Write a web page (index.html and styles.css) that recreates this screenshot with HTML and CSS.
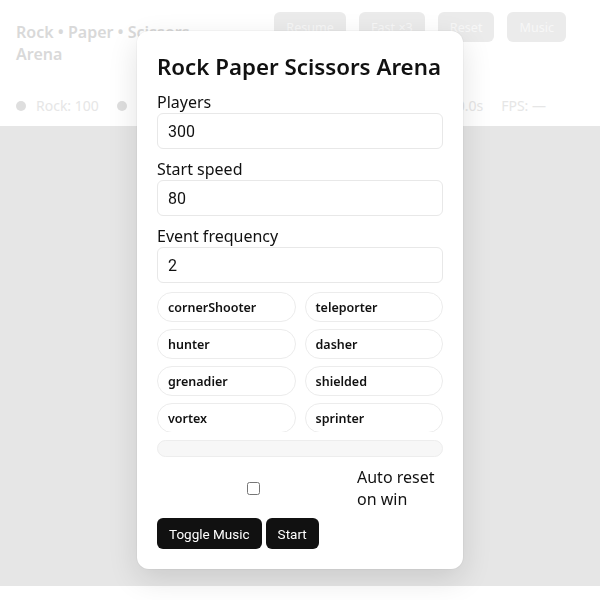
FILE: index.html
```html
<!DOCTYPE html>
<html>
<head>
<meta charset="utf-8">
<link rel="stylesheet" href="styles.css">
</head>
<body>
<header class="topbar">
  <div class="toprow">
    <h1 class="apptitle">Rock • Paper • Scissors Arena</h1>
    <div class="controls">
      <button class="ctl">Resume</button>
      <button class="ctl">Fast ×3</button>
      <button class="ctl">Reset</button>
      <button class="ctl">Music</button>
    </div>
  </div>
  <div class="stats">
    <span class="stat"><i class="dot"></i>Rock: 100</span>
    <span class="stat"><i class="dot"></i>Paper: 100</span>
    <span class="stat"><i class="dot"></i>Scissors: 100</span>
    <span class="spacer"></span>
    <span class="stat">Time: 0:0.0s</span>
    <span class="stat">FPS: —</span>
  </div>
</header>
<main class="arena"></main>

<div class="overlay">
  <div class="modal">
    <h2 class="mtitle">Rock Paper Scissors Arena</h2>
    <label class="field"><span class="flabel">Players</span><input class="finput" type="text" value="300"></label>
    <label class="field"><span class="flabel">Start speed</span><input class="finput" type="text" value="80"></label>
    <label class="field"><span class="flabel">Event frequency</span><input class="finput" type="text" value="2"></label>
    <div class="chips">
      <div class="chip">cornerShooter</div>
      <div class="chip">teleporter</div>
      <div class="chip">hunter</div>
      <div class="chip">dasher</div>
      <div class="chip">grenadier</div>
      <div class="chip">shielded</div>
      <div class="chip">vortex</div>
      <div class="chip">sprinter</div>
    </div>
    <div class="bar"></div>
    <label class="autoreset"><span class="cbwrap"><input type="checkbox" class="cb"></span><span class="cbtext">Auto reset on win</span></label>
    <div class="actions"><button class="btn">Toggle Music</button><button class="btn">Start</button></div>
  </div>
</div>
</body>
</html>
```

FILE: styles.css
```css
* { box-sizing: border-box; }
html, body { margin: 0; padding: 0; background: #fff; }
body { font-family: "Noto Sans", "Open Sans", sans-serif; height: 600px; overflow: hidden; }

.topbar { background: #fff; height: 126px; padding: 12px 16px 0 16px; display: flex; flex-direction: column; }
.toprow { display: flex; justify-content: space-between; align-items: flex-start; }
.apptitle { margin: 9px 0 0 0; font-size: 16px; line-height: 22px; font-weight: 600; color: #d9d9d9; width: 200px; }
.controls { display: flex; gap: 13px; margin-right: 18px; }
.ctl { font-family: "Noto Sans", sans-serif; font-size: 12.6px; height: 30px; padding: 0 12px; border: 0; border-radius: 6px; background: #ebebeb; color: #f7f7f7; }
.stats { display: flex; align-items: center; gap: 18px; margin-top: 31px; font-size: 14px; color: #e6e6e6; line-height: 20px; padding-right: 38px; }
.stat { display: flex; align-items: center; gap: 10px; }
.dot { display: inline-block; width: 10px; height: 10px; border-radius: 50%; background: #dedede; }
.spacer { flex: 1; }

.arena { height: 460px; background: #e6e6e6; }

.overlay { position: fixed; inset: 0; display: flex; align-items: center; justify-content: center; }
.modal { width: 326px; background: #fff; border-radius: 12px; padding: 20px; box-shadow: 0 10px 30px rgba(0,0,0,0.12), 0 0 0 1px rgba(0,0,0,0.03); display: flex; flex-direction: column; }
.mtitle { margin: 1px 0 9px 0; font-size: 22.3px; line-height: 30px; font-weight: 600; color: #111; }
.field { display: flex; flex-direction: column; margin-bottom: 9px; }
.flabel { font-size: 16px; line-height: 22px; color: #111; }
.finput { height: 36px; border: 1px solid #e8e8e8; border-radius: 6px; padding: 0 10px; font-family: Roboto, sans-serif; font-size: 16px; color: #111; background: #fff; outline: none; }
.chips { display: grid; grid-template-columns: 1fr 1fr; grid-auto-rows: 30px; gap: 7px 9px; height: 140px; overflow: hidden; }
.chip { height: 30px; border: 1px solid #ececec; border-radius: 15px; padding: 0 10px; font-size: 12.5px; font-weight: 600; line-height: 29px; color: #111; }
.bar { margin-top: 8px; height: 17px; border: 1px solid #ededed; border-radius: 9px; background: #f7f7f7; }
.autoreset { margin-top: 9px; display: flex; align-items: center; gap: 7px; }
.cbwrap { flex: 1; display: flex; justify-content: center; }
.cb { margin: 0; width: 13px; height: 13px; }
.cbtext { width: 86px; font-size: 16px; line-height: 22px; color: #111; }
.actions { margin-top: 8px; display: flex; gap: 4px; }
.btn { height: 31px; padding: 0 12px; border: 0; border-radius: 6px; background: #111; color: #fff; font-family: Roboto, sans-serif; font-size: 13.5px; }
```
